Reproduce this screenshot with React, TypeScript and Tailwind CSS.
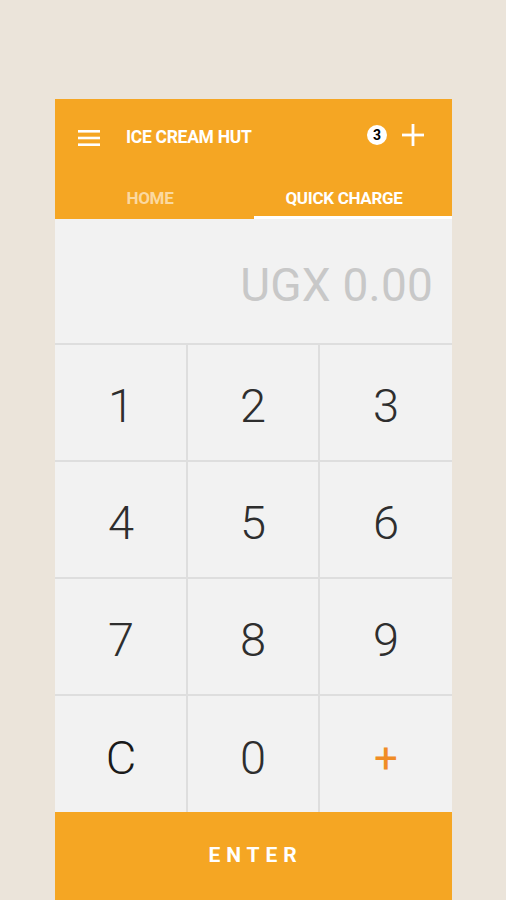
import React from "react";

export default function App() {
  const rows = [
    ["1", "2", "3"],
    ["4", "5", "6"],
    ["7", "8", "9"],
    ["C", "0", "+"],
  ];
  return (
    <div className="w-[506px] h-[900px] bg-[#ebe4da] overflow-hidden" style={{ fontFamily: "Roboto, 'Noto Sans', sans-serif" }}>
      <div className="h-[99px]" />
      <div className="ml-[55px] w-[397px] flex flex-col">
        {/* header */}
        <div className="bg-[#f5a623] flex flex-col">
          <div className="h-[76px] flex items-center pl-[23px] pr-[28px]">
            <svg width="22" height="18" viewBox="0 0 22 18" className="mt-[1px]">
              <rect x="0" y="1" width="22" height="2.6" fill="#fff" />
              <rect x="0" y="7.7" width="22" height="2.6" fill="#fff" />
              <rect x="0" y="14.4" width="22" height="2.6" fill="#fff" />
            </svg>
            <div className="ml-[26px] text-white font-bold text-[17.5px] tracking-[-0.3px] mt-[1px]">ICE CREAM HUT</div>
            <div className="flex-1" />
            <div className="w-[20px] h-[20px] rounded-full bg-white flex items-center justify-center text-black text-[14px] font-bold mr-[15px] -mt-[4px]">3</div>
            <svg width="22" height="22" viewBox="0 0 22 22" className="-mt-[4px]">
              <rect x="9.6" y="0" width="2.8" height="22" fill="#fff" />
              <rect x="0" y="9.6" width="22" height="2.8" fill="#fff" />
            </svg>
          </div>
          <div className="h-[44px] flex">
            <div className="w-[199px] flex items-center justify-center text-[17px] font-bold text-[#fbd9a0] pt-[3px] pr-[9px] tracking-[-0.3px]">HOME</div>
            <div className="flex-1 flex flex-col">
              <div className="flex-1 flex items-center justify-center text-[17px] font-bold text-white pt-[6px] pr-[18px] tracking-[-0.3px]">QUICK CHARGE</div>
              <div className="h-[3px] bg-white" />
            </div>
          </div>
        </div>
        {/* display */}
        <div className="h-[124px] bg-[#f2f2f2] flex items-center justify-end pr-[19px]">
          <div className="text-[46px] text-[#c8c8c8] mt-[8px] tracking-[0.2px]">UGX 0.00</div>
        </div>
        {/* keypad */}
        <div className="flex flex-col bg-[#f2f2f2]">
          {rows.map((r, i) => (
            <div key={i} className={`flex ${i === 3 ? "h-[118px]" : "h-[117px]"} border-t-2 border-[#dedede]`}>
              {r.map((k, j) => (
                <div
                  key={j}
                  className={`flex items-center justify-center ${j === 1 ? "w-[134px] border-x-2 border-[#dedede] -ml-[1px]" : "flex-1"} ${k === "+" ? "text-[#f08c25] text-[42px]" : k === "C" ? "text-[#1a1a1a] text-[47px] font-light" : "text-[#2e2e2e] text-[47px] font-light"}`}
                >
                  <span className="mt-[8px]">{k}</span>
                </div>
              ))}
            </div>
          ))}
        </div>
        {/* enter */}
        <div className="h-[88px] bg-[#f5a623] flex items-center justify-center">
          <span className="text-white font-bold text-[21px] tracking-[0.28em] ml-[4px] mt-[0px]">ENTER</span>
        </div>
      </div>
    </div>
  );
}
